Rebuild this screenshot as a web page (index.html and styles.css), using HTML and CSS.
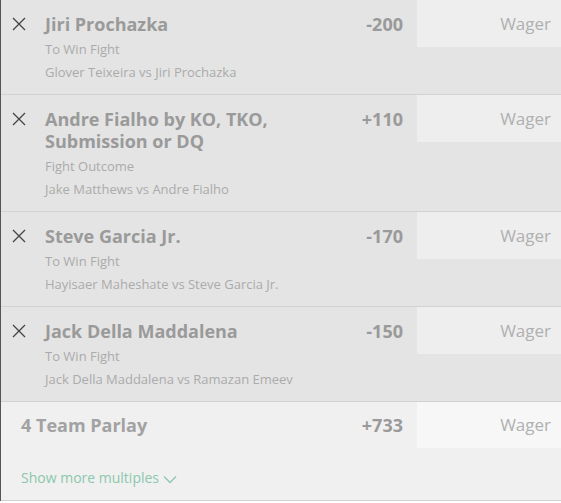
FILE: index.html
```html
<!DOCTYPE html>
<html lang="en">
  <head>
    <meta charset="UTF-8" />
    <meta name="viewport" content="width=device-width, initial-scale=1.0" />
    <title>Bet Slip</title>
    <link rel="stylesheet" href="styles.css">
  </head>
  <body>
    <div class="slip">
      <!-- selections -->
      <div class="bet">
        <button class="remove" aria-label="Remove">
          <svg width="14" height="14" viewBox="0 0 14 14"><path d="M1 1L13 13M13 1L1 13" stroke="#444" stroke-width="1.3" fill="none"/></svg>
        </button>
        <div class="info">
          <div class="pick">Jiri Prochazka</div>
          <div class="market">To Win Fight</div>
          <div class="event">Glover Teixeira vs Jiri Prochazka</div>
        </div>
        <div class="odds">-200</div>
        <div class="wager">Wager</div>
      </div>

      <div class="bet">
        <button class="remove" aria-label="Remove">
          <svg width="14" height="14" viewBox="0 0 14 14"><path d="M1 1L13 13M13 1L1 13" stroke="#444" stroke-width="1.3" fill="none"/></svg>
        </button>
        <div class="info">
          <div class="pick">Andre Fialho by KO, TKO, Submission or DQ</div>
          <div class="market">Fight Outcome</div>
          <div class="event">Jake Matthews vs Andre Fialho</div>
        </div>
        <div class="odds">+110</div>
        <div class="wager">Wager</div>
      </div>

      <div class="bet">
        <button class="remove" aria-label="Remove">
          <svg width="14" height="14" viewBox="0 0 14 14"><path d="M1 1L13 13M13 1L1 13" stroke="#444" stroke-width="1.3" fill="none"/></svg>
        </button>
        <div class="info">
          <div class="pick">Steve Garcia Jr.</div>
          <div class="market">To Win Fight</div>
          <div class="event">Hayisaer Maheshate vs Steve Garcia Jr.</div>
        </div>
        <div class="odds">-170</div>
        <div class="wager">Wager</div>
      </div>

      <div class="bet">
        <button class="remove" aria-label="Remove">
          <svg width="14" height="14" viewBox="0 0 14 14"><path d="M1 1L13 13M13 1L1 13" stroke="#444" stroke-width="1.3" fill="none"/></svg>
        </button>
        <div class="info">
          <div class="pick">Jack Della Maddalena</div>
          <div class="market">To Win Fight</div>
          <div class="event">Jack Della Maddalena vs Ramazan Emeev</div>
        </div>
        <div class="odds">-150</div>
        <div class="wager">Wager</div>
      </div>

      <!-- multiples -->
      <div class="parlay">
        <div class="parlay-row">
          <div class="parlay-name">4 Team Parlay</div>
          <div class="odds">+733</div>
          <div class="wager">Wager</div>
        </div>
        <a class="more" href="#">Show more multiples
          <svg width="14" height="9" viewBox="0 0 14 9"><path d="M1 1.5L7 7.5L13 1.5" stroke="#8cc7ae" stroke-width="1.3" fill="none"/></svg>
        </a>
      </div>
    </div>
  </body>
</html>
```

FILE: styles.css
```css
body {
  margin: 0;
  padding: 0;
  background: #fff;
  font-family: "Open Sans", Arial, sans-serif;
}
.slip {
  width: 561px;
  border-left: 1px solid #555;
}
.bet {
  display: flex;
  align-items: flex-start;
  background: #e4e4e4;
  border-bottom: 1px solid #d2d2d2;
}
.remove {
  flex: none;
  width: 44px;
  padding: 17px 0 0 11px;
  margin: 0;
  border: 0;
  background: none;
  text-align: left;
  line-height: 0;
}
.info {
  flex: 1;
  padding: 13px 0 10px;
  min-width: 0;
}
.pick {
  font-size: 18px;
  font-weight: bold;
  line-height: 22px;
  color: #9a9a9a;
  max-width: 240px;
}
.market {
  margin-top: 3px;
}
.market,
.event {
  font-size: 13px;
  line-height: 23px;
  color: #ababab;
}
.odds {
  flex: none;
  width: 80px;
  padding: 13px 14px 0 0;
  text-align: right;
  font-size: 18px;
  font-weight: bold;
  line-height: 22px;
  color: #9a9a9a;
}
.wager {
  flex: none;
  width: 145px;
  height: 47px;
  box-sizing: border-box;
  padding: 13px 11px 0 0;
  background: #eeeeee;
  text-align: right;
  font-size: 17px;
  line-height: 22px;
  color: #b0b0b0;
}
.parlay {
  background: #f0f0f0;
  border-bottom: 1px solid #d2d2d2;
  height: 98px;
}
.parlay-row {
  display: flex;
  align-items: flex-start;
}
.parlay-name {
  flex: 1;
  padding: 12px 0 0 20px;
  font-size: 18px;
  font-weight: bold;
  line-height: 22px;
  color: #a2a2a2;
}
.parlay .odds,
.parlay .wager {
  padding-top: 12px;
}
.parlay .wager {
  height: 46px;
  background: #f7f7f7;
}
.more {
  display: inline-block;
  margin: 19px 0 0 20px;
  font-size: 14px;
  line-height: 22px;
  color: #8cc7ae;
  text-decoration: none;
}
.more svg {
  vertical-align: middle;
}
```
